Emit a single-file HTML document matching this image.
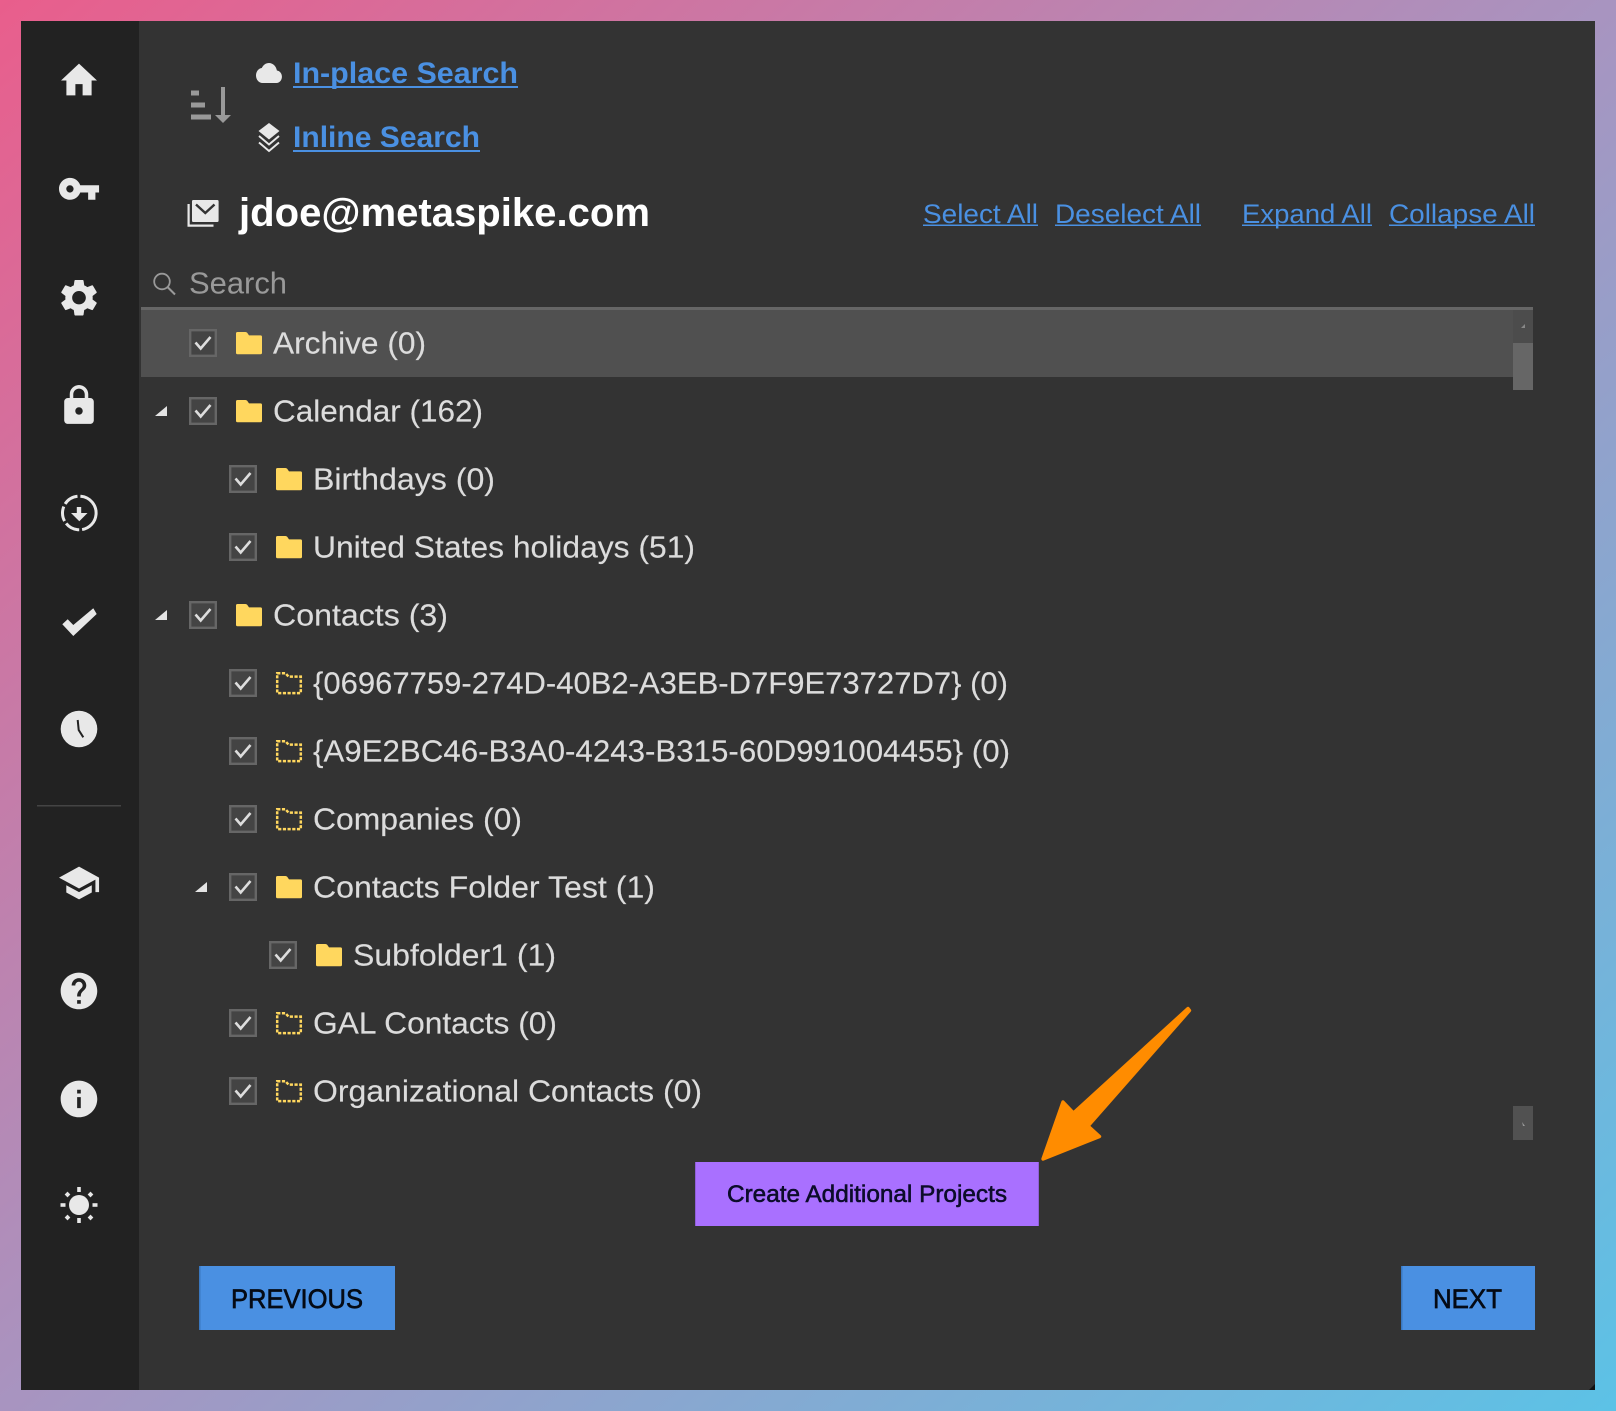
<!DOCTYPE html>
<html><head><meta charset="utf-8"><title>Folders</title>
<style>
html,body{margin:0;padding:0;width:1616px;height:1411px;overflow:hidden;background:linear-gradient(to bottom right,#e95e8c 0%,#a894c0 50%,#5cc2e6 100%)}
svg{position:absolute;left:0;top:0;display:block}
text{font-family:"Liberation Sans",sans-serif}
.r{font-size:31px;fill:#dcdcdc;stroke:#dcdcdc;stroke-width:.15px;transform:translateY(.5px)}
.l{font-size:27px;fill:#4a90e2}
.b{font-size:30px;font-weight:bold;fill:#4a90e2}
.i{fill:#e8e8e8}
</style></head><body>
<svg width="1616" height="1411" viewBox="0 0 1616 1411" xmlns="http://www.w3.org/2000/svg">
<defs>
<g id="cb"><rect x="1.2" y="1.2" width="25.6" height="25.6" fill="#444" stroke="#666" stroke-width="2.4"/><path d="M6.5 13.5L11.7 19.5L21.5 8" fill="none" stroke="#ddd" stroke-width="2.6"/></g>
<path id="f" d="M1.5 0H9.5Q10.5 0 11.2 .8L13 3.4H24.5A1.5 1.5 0 0 1 26 4.9V20.8A1.5 1.5 0 0 1 24.5 22.3H1.5A1.5 1.5 0 0 1 0 20.8V1.5A1.5 1.5 0 0 1 1.5 0Z" fill="#ffd75e"/>
<path id="d" d="M1.2 1.2H9.5L12.5 4.6H24.8V21.1H1.2Z" fill="none" stroke="#ffd75e" stroke-width="2.5" stroke-dasharray="3.2 1.5"/>
<path id="t" d="M12 0V10H0Z" fill="#e4e4e4"/>
</defs>

<!-- window -->
<rect x="21" y="21" width="1574" height="1369" fill="#333"/>
<rect x="21" y="21" width="118" height="1369" fill="#222"/>
<path d="M1595 1384V1390H1589Z" fill="#111"/>

<!-- sidebar icons -->
<path class="i" transform="translate(57.4 58) scale(1.8 1.87)" d="M10 20v-6h4v6h5v-8h3L12 3 2 12h3v8z"/>
<path class="i" transform="translate(57.2 167) scale(1.82)" d="M12.65 10C11.83 7.67 9.61 6 7 6c-3.31 0-6 2.69-6 6s2.69 6 6 6c2.61 0 4.83-1.67 5.65-4H17v4h4v-4h2v-4H12.65zM7 14c-1.1 0-2-.9-2-2s.9-2 2-2 2 .9 2 2-.9 2-2 2z"/>
<path class="i" transform="translate(56.2 275.5) scale(1.9 1.85)" d="M19.14 12.94c.04-.3.06-.61.06-.94 0-.32-.02-.64-.07-.94l2.03-1.58c.18-.14.23-.41.12-.61l-1.92-3.32c-.12-.22-.37-.29-.59-.22l-2.39.96c-.5-.38-1.03-.7-1.62-.94l-.36-2.54c-.04-.24-.24-.41-.48-.41h-3.84c-.24 0-.43.17-.47.41l-.36 2.54c-.59.24-1.13.57-1.62.94l-2.39-.96c-.22-.08-.47 0-.59.22L2.74 8.87c-.12.21-.08.47.12.61l2.03 1.58c-.05.3-.09.63-.09.94s.02.64.07.94l-2.03 1.58c-.18.14-.23.41-.12.61l1.92 3.32c.12.22.37.29.59.22l2.39-.96c.5.38 1.03.7 1.62.94l.36 2.54c.05.24.24.41.48.41h3.84c.24 0 .44-.17.47-.41l.36-2.54c.59-.24 1.13-.56 1.62-.94l2.39.96c.22.08.47 0 .59-.22l1.92-3.32c.12-.22.07-.47-.12-.61l-2.01-1.58zM12 15.6c-1.98 0-3.6-1.62-3.6-3.6s1.62-3.6 3.6-3.6 3.6 1.62 3.6 3.6-1.62 3.6-3.6 3.6z"/>
<path class="i" transform="translate(56.8 383.2) scale(1.85)" d="M18 8h-1V6c0-2.76-2.24-5-5-5S7 3.24 7 6v2H6c-1.1 0-2 .9-2 2v10c0 1.1.9 2 2 2h12c1.1 0 2-.9 2-2V10c0-1.1-.9-2-2-2zm-6 9c-1.1 0-2-.9-2-2s.9-2 2-2 2 .9 2 2-.9 2-2 2zm3.1-9H8.9V6c0-1.71 1.39-3.1 3.1-3.1 1.71 0 3.1 1.39 3.1 3.1v2z"/>
<!-- download -->
<circle cx="79.3" cy="513" r="16.8" fill="none" stroke="#e8e8e8" stroke-width="3" stroke-dasharray="48.4 2.9 15 2.9 15 2.9 15 2.9" transform="rotate(-85 79.3 513)"/>
<path class="i" d="M76.8 507H81.2V513H87.5L79.3 521.2L71 513H76.8Z"/>
<!-- check -->
<path class="i" d="M93.3 608.3L96.7 614L73.3 636L62.3 624.3L67.7 619.3L73.3 625Z"/>
<!-- clock -->
<circle class="i" cx="79" cy="729" r="18.3"/>
<path d="M77.7 720L78.7 730L83.3 737.3" fill="none" stroke="#222" stroke-width="2"/>
<rect x="37" y="805" width="84" height="1.5" fill="#444"/>
<path class="i" transform="translate(57.2 861.2) scale(1.82)" d="M5 13.18v4L12 21l7-3.82v-4L12 17l-7-3.82zM12 3L1 9l11 6 9-4.91V17h2V9L12 3z"/>
<path class="i" transform="translate(57 969) scale(1.83)" d="M12 2C6.48 2 2 6.48 2 12s4.48 10 10 10 10-4.48 10-10S17.52 2 12 2zm1 17h-2v-2h2v2zm2.07-7.75l-.9.92C13.45 12.9 13 13.5 13 15h-2v-.5c0-1.1.45-2.1 1.17-2.83l1.24-1.26c.37-.36.59-.86.59-1.41 0-1.1-.9-2-2-2s-2 .9-2 2H8c0-2.21 1.79-4 4-4s4 1.79 4 4c0 .88-.36 1.68-.93 2.25z"/>
<path class="i" transform="translate(57 1077) scale(1.83)" d="M12 2C6.48 2 2 6.48 2 12s4.48 10 10 10 10-4.48 10-10S17.52 2 12 2zm1 15h-2v-6h2v6zm0-8h-2V7h2v2z"/>
<!-- sun -->
<circle class="i" cx="79" cy="1205" r="10"/>
<g class="i">
<rect x="77.2" y="1187" width="3.6" height="5"/><rect x="77.2" y="1218" width="3.6" height="5"/>
<rect x="60.5" y="1203.2" width="5" height="3.6"/><rect x="92.5" y="1203.2" width="5" height="3.6"/>
<rect x="65.5" y="1192.5" width="4" height="4" transform="rotate(45 67.5 1194.5)"/><rect x="88.5" y="1192.5" width="4" height="4" transform="rotate(45 90.5 1194.5)"/>
<rect x="65.5" y="1215.5" width="4" height="4" transform="rotate(45 67.5 1217.5)"/><rect x="88.5" y="1215.5" width="4" height="4" transform="rotate(45 90.5 1217.5)"/>
</g>

<!-- sort icon -->
<g fill="#999"><rect x="191" y="90.5" width="8" height="5"/><rect x="191" y="102.5" width="14" height="5"/><rect x="191" y="114.5" width="20" height="5"/><rect x="221" y="87" width="4" height="28"/><path d="M215 115H231L223 123Z"/></g>

<!-- search type links -->
<path class="i" transform="translate(256 58) scale(1.08 1.25)" d="M19.35 10.04C18.67 6.59 15.64 4 12 4 9.11 4 6.6 5.64 5.35 8.04 2.34 8.36 0 10.91 0 14c0 3.31 2.69 6 6 6h13c2.76 0 5-2.24 5-5 0-2.64-2.05-4.78-4.65-4.96z"/>
<text class="b" x="293" y="83" textLength="225" lengthAdjust="spacingAndGlyphs">In-place Search</text>
<rect x="293" y="86" width="225" height="2" fill="#4a90e2"/>
<path class="i" d="M269 123L279.5 131L269 139.5L258.5 131Z"/>
<path d="M259 136L269 144.5L279 136M259 142.5L269 151L279 142.5" fill="none" stroke="#e8e8e8" stroke-width="1.9"/>
<text class="b" x="293" y="147" textLength="187" lengthAdjust="spacingAndGlyphs">Inline Search</text>
<rect x="293" y="150" width="187" height="2" fill="#4a90e2"/>

<!-- mail header -->
<path class="i" d="M193 200H217.5A1.2 1.2 0 0 1 218.6 201.2V220.8A1.2 1.2 0 0 1 217.5 222H193A1.2 1.2 0 0 1 192 220.8V201.2A1.2 1.2 0 0 1 193 200Z"/>
<path d="M196 204.5L205.3 213L214.5 204.5" fill="none" stroke="#333" stroke-width="2.4"/>
<path d="M188.6 204V225.6H213.5" fill="none" stroke="#e8e8e8" stroke-width="2.2"/>
<text x="239" y="226" font-size="40" font-weight="bold" fill="#fff" textLength="411" lengthAdjust="spacingAndGlyphs">jdoe@metaspike.com</text>

<text class="l" x="923" y="223" textLength="115" lengthAdjust="spacingAndGlyphs">Select All</text><rect x="923" y="224.5" width="115" height="1.5" fill="#4a90e2"/>
<text class="l" x="1055" y="223" textLength="146" lengthAdjust="spacingAndGlyphs">Deselect All</text><rect x="1055" y="224.5" width="146" height="1.5" fill="#4a90e2"/>
<text class="l" x="1242" y="223" textLength="130" lengthAdjust="spacingAndGlyphs">Expand All</text><rect x="1242" y="224.5" width="130" height="1.5" fill="#4a90e2"/>
<text class="l" x="1389" y="223" textLength="146" lengthAdjust="spacingAndGlyphs">Collapse All</text><rect x="1389" y="224.5" width="146" height="1.5" fill="#4a90e2"/>

<!-- search -->
<circle cx="162" cy="281.5" r="7.8" fill="none" stroke="#999" stroke-width="1.8"/>
<path d="M167.5 287L175 294.5" stroke="#999" stroke-width="2" fill="none"/>
<text x="189" y="293.5" font-size="31" fill="#999" textLength="98" lengthAdjust="spacingAndGlyphs">Search</text>

<!-- selected row and scrollbar -->
<rect x="141" y="308" width="1372" height="69" fill="#505050"/>
<rect x="1513" y="308" width="20" height="35" fill="#4c4c4c"/>
<rect x="141" y="307" width="1392" height="3" fill="#666"/>
<rect x="1513" y="343" width="20" height="47" fill="#666"/>
<path d="M1525 324V328H1521Z" fill="#888"/>
<rect x="1513" y="1106" width="20" height="34" fill="#515151"/>
<path d="M1522 1122L1525 1126H1523Z" fill="#999"/>

<!-- rows -->
<use href="#cb" x="189" y="329"/><use href="#f" x="236" y="332"/>
<text class="r" x="273" y="353" textLength="153" lengthAdjust="spacingAndGlyphs">Archive (0)</text>

<use href="#t" x="155" y="406"/><use href="#cb" x="189" y="397"/><use href="#f" x="236" y="400"/>
<text class="r" x="273" y="421" textLength="210" lengthAdjust="spacingAndGlyphs">Calendar (162)</text>

<use href="#cb" x="229" y="465"/><use href="#f" x="276" y="468"/>
<text class="r" x="313" y="489" textLength="182" lengthAdjust="spacingAndGlyphs">Birthdays (0)</text>

<use href="#cb" x="229" y="533"/><use href="#f" x="276" y="536"/>
<text class="r" x="313" y="557" textLength="382" lengthAdjust="spacingAndGlyphs">United States holidays (51)</text>

<use href="#t" x="155" y="610"/><use href="#cb" x="189" y="601"/><use href="#f" x="236" y="604"/>
<text class="r" x="273" y="625" textLength="175" lengthAdjust="spacingAndGlyphs">Contacts (3)</text>

<use href="#cb" x="229" y="669"/><use href="#d" x="276" y="672"/>
<text class="r" x="313" y="693" textLength="695" lengthAdjust="spacingAndGlyphs">{06967759-274D-40B2-A3EB-D7F9E73727D7} (0)</text>

<use href="#cb" x="229" y="737"/><use href="#d" x="276" y="740"/>
<text class="r" x="313" y="761" textLength="697" lengthAdjust="spacingAndGlyphs">{A9E2BC46-B3A0-4243-B315-60D991004455} (0)</text>

<use href="#cb" x="229" y="805"/><use href="#d" x="276" y="808"/>
<text class="r" x="313" y="829" textLength="209" lengthAdjust="spacingAndGlyphs">Companies (0)</text>

<use href="#t" x="195" y="882"/><use href="#cb" x="229" y="873"/><use href="#f" x="276" y="876"/>
<text class="r" x="313" y="897" textLength="342" lengthAdjust="spacingAndGlyphs">Contacts Folder Test (1)</text>

<use href="#cb" x="269" y="941"/><use href="#f" x="316" y="944"/>
<text class="r" x="353" y="965" textLength="203" lengthAdjust="spacingAndGlyphs">Subfolder1 (1)</text>

<use href="#cb" x="229" y="1009"/><use href="#d" x="276" y="1012"/>
<text class="r" x="313" y="1033" textLength="244" lengthAdjust="spacingAndGlyphs">GAL Contacts (0)</text>

<use href="#cb" x="229" y="1077"/><use href="#d" x="276" y="1080"/>
<text class="r" x="313" y="1101" textLength="389" lengthAdjust="spacingAndGlyphs">Organizational Contacts (0)</text>

<!-- purple button -->
<rect x="695" y="1162" width="344" height="64" fill="#a970ff"/>
<rect x="695" y="1162" width="1" height="64" fill="#8f5fd8"/><rect x="1038" y="1162" width="1" height="64" fill="#8f5fd8"/>
<text x="727" y="1202" font-size="24" fill="#0c0c2a" stroke="#0c0c2a" stroke-width=".55" textLength="280" lengthAdjust="spacingAndGlyphs">Create Additional Projects</text>

<!-- arrow -->
<path d="M1043 1159L1063 1102L1073.5 1113L1188 1008.5L1189.5 1010.5L1088 1126L1099.5 1136.5Z" fill="#ff8c00" stroke="#ff8c00" stroke-width="3.4" stroke-linejoin="round"/>

<!-- nav buttons -->
<rect x="199" y="1266" width="196" height="64" fill="#4a90e2"/><rect x="199" y="1266" width="1.5" height="64" fill="#3a78c0"/>
<text x="231" y="1308" font-size="27" fill="#050a14" stroke="#050a14" stroke-width=".65" textLength="132" lengthAdjust="spacingAndGlyphs">PREVIOUS</text>
<rect x="1401" y="1266" width="134" height="64" fill="#4a90e2"/><rect x="1401" y="1266" width="1.5" height="64" fill="#3a78c0"/>
<text x="1433" y="1308" font-size="27" fill="#050a14" stroke="#050a14" stroke-width=".65" textLength="69" lengthAdjust="spacingAndGlyphs">NEXT</text>
</svg>
</body></html>
